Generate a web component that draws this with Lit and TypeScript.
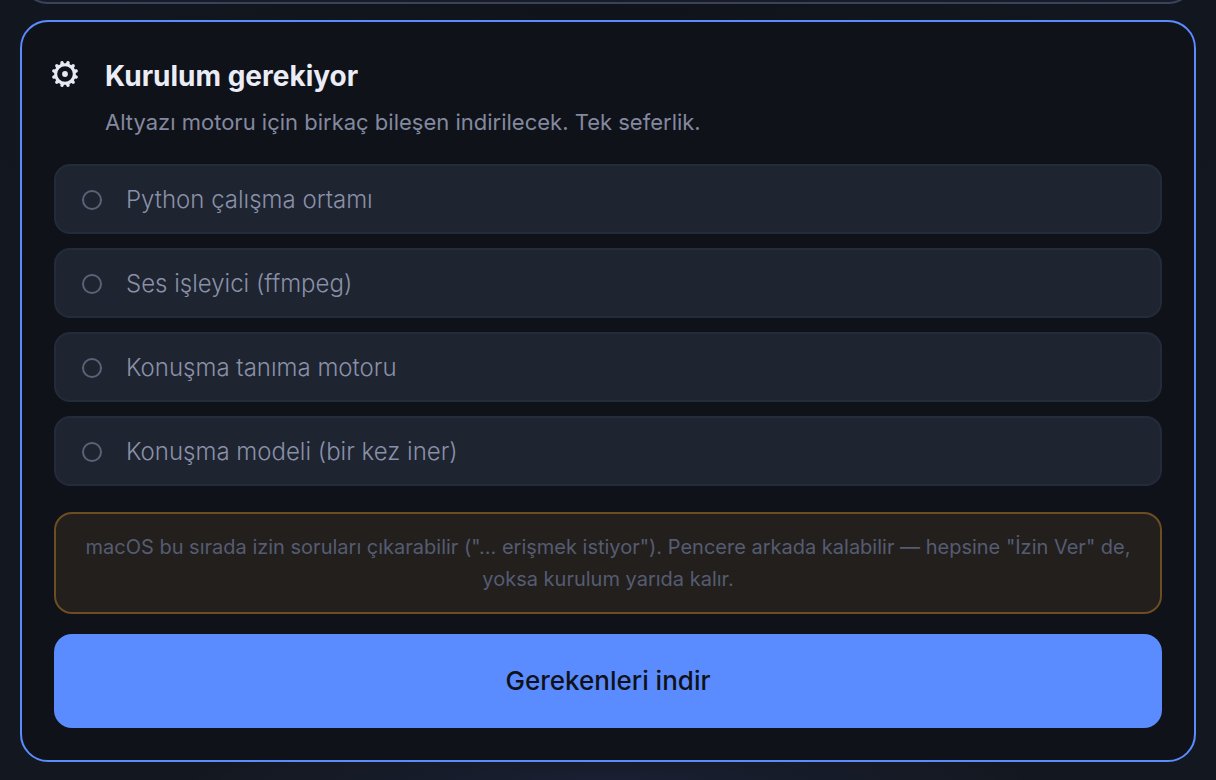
import { LitElement, html, css, svg } from "lit";
import { customElement, state } from "lit/decorators.js";

const TEETH = Array.from({ length: 12 }, (_, i) => i * 30);

@customElement("gear-icon")
class GearIcon extends LitElement {
  static styles = css`
    :host {
      display: block;
      flex: none;
      width: 30px;
      height: 30px;
      color: #e6e9f4;
    }
    .glyph {
      display: block;
      width: 100%;
      height: 100%;
    }
  `;

  render() {
    return html`
      <svg class="glyph" viewBox="0 0 30 30" aria-hidden="true">
        ${TEETH.map(
          (a) => svg`<path d="M12.9 5.2 L13.6 2.3 Q15 1.1 16.4 2.3 L17.1 5.2 Z" fill="currentColor" transform="rotate(${a + 15} 15 15)" />`
        )}
        <circle cx="15" cy="15" r="9.3" fill="none" stroke="currentColor" stroke-width="3" />
        <circle cx="15" cy="15" r="2.9" fill="currentColor" />
      </svg>
    `;
  }
}

@customElement("app-root")
class AppRoot extends LitElement {
  @state() private steps = [
    "Python çalışma ortamı",
    "Ses işleyici (ffmpeg)",
    "Konuşma tanıma motoru",
    "Konuşma modeli (bir kez iner)",
  ];

  static styles = css`
    :host {
      display: flex;
      flex-direction: column;
      justify-content: flex-end;
      gap: 16px;
      box-sizing: border-box;
      height: 100vh;
      overflow: hidden;
      padding: 0 20px 18px;
      font-family: Inter, "Noto Sans", sans-serif;
      font-weight: 400;
      color: #83899f;
      background:
        radial-gradient(ellipse 420px 40px at 50% 100%, #1a1f33, transparent),
        radial-gradient(ellipse 60% 60% at 50% 0, #10131a, transparent),
        #131820;
    }
    .panel {
      flex: none;
      box-sizing: border-box;
      height: 80px;
      border: 2px solid #3a425c;
      border-radius: 28px;
      background: #181c26;
    }
    .card {
      flex: none;
      border: 2px solid #5a8cff;
      border-radius: 28px;
      padding: 32px 0;
      background: #0f1219;
    }
    .head {
      display: flex;
      gap: 25px;
      padding: 0 28px;
    }
    .gear {
      margin-top: 5px;
    }
    .title {
      margin: 0;
      font-size: 28px;
      line-height: 44px;
      font-weight: 700;
      color: #eaecf6;
    }
    .sub {
      margin: 4px 0 0;
      font-size: 22px;
      line-height: 40px;
    }
    .body {
      display: flex;
      flex-direction: column;
      padding: 22px 32px 0;
    }
    .steps {
      display: flex;
      flex-direction: column;
      gap: 14px;
      margin: 0;
      padding: 0;
      list-style: none;
    }
    .step {
      display: flex;
      align-items: center;
      gap: 24px;
      padding: 16px 26px 14px;
      border: 2px solid #242b3b;
      border-radius: 16px;
      background: #1e2430;
      color: #8a90a8;
      font-size: 24px;
      font-weight: 300;
      line-height: 36px;
    }
    .dot {
      box-sizing: border-box;
      width: 20px;
      height: 20px;
      border: 2px solid #5a6278;
      border-radius: 50%;
    }
    .note {
      margin: 26px 0 20px;
      padding: 17px 28px;
      border: 2px solid #6d4e22;
      border-radius: 18px;
      background: #231f1c;
      color: #555c72;
      font-size: 20px;
      line-height: 32px;
      text-align: center;
    }
    .go {
      border: 0;
      border-radius: 18px;
      padding: 27px;
      background: #5a8cff;
      color: #0f1219;
      font-family: inherit;
      font-size: 26px;
      line-height: 40px;
      font-weight: 500;
      cursor: pointer;
    }
  `;

  render() {
    return html`
      <div class="panel"></div>
      <section class="card" aria-labelledby="title">
        <header class="head">
          <gear-icon class="gear"></gear-icon>
          <div>
            <h2 class="title" id="title">Kurulum gerekiyor</h2>
            <p class="sub">Altyazı motoru için birkaç bileşen indirilecek. Tek seferlik.</p>
          </div>
        </header>
        <div class="body">
          <ul class="steps">
            ${this.steps.map(
              (s) => html`<li class="step"><span class="dot"></span><span>${s}</span></li>`
            )}
          </ul>
          <p class="note">
            macOS bu sırada izin soruları çıkarabilir ("... erişmek istiyor"). Pencere arkada kalabilir — hepsine "İzin Ver" de, yoksa kurulum yarıda kalır.
          </p>
          <button class="go" type="button">Gerekenleri indir</button>
        </div>
      </section>
    `;
  }
}
